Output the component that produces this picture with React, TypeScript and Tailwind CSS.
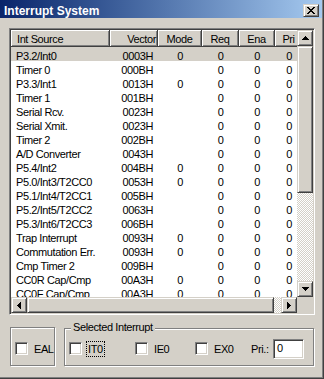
import { type ReactNode } from 'react';

const raised =
  'border border-t-[#d4d0c8] border-l-[#d4d0c8] border-r-[#404040] border-b-[#404040] bg-[#d4d0c8] shadow-[inset_1px_1px_#fff,inset_-1px_-1px_#808080]';
const sunken =
  'border border-t-[#808080] border-l-[#808080] border-r-white border-b-white shadow-[inset_1px_1px_#404040,inset_-1px_-1px_#d4d0c8]';
const dither =
  'bg-[repeating-conic-gradient(#d4d0c8_0%_25%,#fff_0%_50%)] bg-[length:2px_2px]';
const etched = 'border border-[#808080] shadow-[inset_1px_1px_#fff,1px_1px_#fff]';

const rows: string[][] = [
  ['P3.2/Int0', '0003H', '0', '0', '0', '0'],
  ['Timer 0', '000BH', '', '0', '0', '0'],
  ['P3.3/Int1', '0013H', '0', '0', '0', '0'],
  ['Timer 1', '001BH', '', '0', '0', '0'],
  ['Serial Rcv.', '0023H', '', '0', '0', '0'],
  ['Serial Xmit.', '0023H', '', '0', '0', '0'],
  ['Timer 2', '002BH', '', '0', '0', '0'],
  ['A/D Converter', '0043H', '', '0', '0', '0'],
  ['P5.4/Int2', '004BH', '0', '0', '0', '0'],
  ['P5.0/Int3/T2CC0', '0053H', '0', '0', '0', '0'],
  ['P5.1/Int4/T2CC1', '005BH', '', '0', '0', '0'],
  ['P5.2/Int5/T2CC2', '0063H', '', '0', '0', '0'],
  ['P5.3/Int6/T2CC3', '006BH', '', '0', '0', '0'],
  ['Trap Interrupt', '0093H', '0', '0', '0', '0'],
  ['Commutation Err.', '0093H', '0', '0', '0', '0'],
  ['Cmp Timer 2', '009BH', '', '0', '0', '0'],
  ['CC0R Cap/Cmp', '00A3H', '0', '0', '0', '0'],
  ['CC0F Cap/Cmp', '00A3H', '0', '0', '0', '0'],
];

const Arrow = ({ dir }: { dir: 'up' | 'down' | 'left' | 'right' }) => {
  const paths = {
    up: 'M3 0h1v1H3z M2 1h3v1H2z M1 2h5v1H1z M0 3h7v1H0z',
    down: 'M0 0h7v1H0z M1 1h5v1H1z M2 2h3v1H2z M3 3h1v1H3z',
    left: 'M3 0h1v7H3z M2 1h1v5H2z M1 2h1v3H1z M0 3h1v1H0z',
    right: 'M0 0h1v7H0z M1 1h1v5H1z M2 2h1v3H2z M3 3h1v1H3z',
  };
  const vertical = dir === 'up' || dir === 'down';
  return (
    <svg width={vertical ? 7 : 4} height={vertical ? 4 : 7} shapeRendering="crispEdges">
      <path d={paths[dir]} fill="#000" />
    </svg>
  );
};

function Checkbox() {
  return <div className={`h-[13px] w-[13px] shrink-0 bg-white ${sunken}`} />;
}

function CheckItem({ label, focus, width }: { label: string; focus?: boolean; width: string }) {
  return (
    <div className={`flex shrink-0 items-center ${width}`}>
      <Checkbox />
      <span
        className={`ml-[4px] border border-dotted px-[1px] leading-[14px] ${
          focus ? 'border-black' : 'border-transparent'
        }`}
      >
        {label}
      </span>
    </div>
  );
}

function HeaderCell({ children, className }: { children: ReactNode; className: string }) {
  return (
    <div
      className={`h-[17px] shrink-0 overflow-hidden whitespace-nowrap border-r border-b border-[#404040] bg-[#d4d0c8] leading-[18px] shadow-[inset_1px_1px_#fff,inset_-1px_-1px_#808080] ${className}`}
    >
      {children}
    </div>
  );
}

export default function App() {
  return (
    <div className="h-[379px] w-[324px] border-r border-b border-[#404040] font-['Liberation_Sans',Arial,sans-serif] text-[11px] tracking-[-0.4px] text-black">
      <div className="flex h-full flex-col border-r border-b border-[#808080] bg-[#d4d0c8]">
        {/* title bar */}
        <div className="flex h-[18px] shrink-0 items-start justify-between bg-linear-to-r from-[#0a246a] to-[#a6caf0]">
          <span className="h-[18px] pl-[4px] text-[12px] font-bold leading-[22px] tracking-normal text-white">
            Interrupt System
          </span>
          <div className={`mr-[3px] mt-[4px] flex h-[13px] w-[16px] items-center justify-center ${raised}`}>
            <svg width="8" height="7" shapeRendering="crispEdges">
              <path
                d="M0 0h2v1H0z M6 0h2v1H6z M1 1h2v1H1z M5 1h2v1H5z M2 2h4v1H2z M3 3h2v1H3z M2 4h4v1H2z M1 5h2v1H1z M5 5h2v1H5z M0 6h2v1H0z M6 6h2v1H6z"
                fill="#000"
              />
            </svg>
          </div>
        </div>

        {/* list view */}
        <div className={`ml-[9px] mt-[10px] h-[287px] w-[306px] p-[1px] ${sunken}`}>
          <div className="grid grid-cols-[286px_16px] grid-rows-[267px_16px]">
            <div className="flex flex-col overflow-hidden bg-white">
              <div className="flex">
                <HeaderCell className="w-[99px] pl-[6px]">Int Source</HeaderCell>
                <HeaderCell className="w-[48px] pr-[1px] text-right">Vector</HeaderCell>
                <HeaderCell className="w-[44px] text-center">Mode</HeaderCell>
                <HeaderCell className="w-[37px] text-center">Req</HeaderCell>
                <HeaderCell className="w-[36px] text-center">Ena</HeaderCell>
                <HeaderCell className="w-[28px] text-center">Pri</HeaderCell>
              </div>
              {rows.map((r, i) => (
                <div
                  key={r[0]}
                  className={`flex h-[14px] shrink-0 leading-[18px] ${i === 0 ? 'bg-[#d4d0c8]' : ''}`}
                >
                  <div className="w-[99px] shrink-0 whitespace-nowrap pl-[5px]">{r[0]}</div>
                  <div className="w-[48px] shrink-0 pr-[5px] text-right">{r[1]}</div>
                  <div className="w-[44px] shrink-0 text-center">{r[2]}</div>
                  <div className="w-[37px] shrink-0 text-center">{r[3]}</div>
                  <div className="w-[36px] shrink-0 text-center">{r[4]}</div>
                  <div className="w-[28px] shrink-0 text-center">{r[5]}</div>
                </div>
              ))}
            </div>

            {/* vertical scrollbar */}
            <div className="flex flex-col">
              <div className={`flex h-[16px] items-center justify-center ${raised}`}>
                <Arrow dir="up" />
              </div>
              <div className={`h-[147px] ${raised}`} />
              <div className={`flex-1 ${dither}`} />
              <div className={`flex h-[16px] items-center justify-center ${raised}`}>
                <Arrow dir="down" />
              </div>
            </div>

            {/* horizontal scrollbar */}
            <div className="flex">
              <div className={`flex w-[16px] items-center justify-center ${raised}`}>
                <Arrow dir="left" />
              </div>
              <div className={`w-[247px] ${raised}`} />
              <div className={`flex-1 ${dither}`} />
              <div className={`flex w-[16px] items-center justify-center ${raised}`}>
                <Arrow dir="right" />
              </div>
            </div>
            <div className="bg-[#d4d0c8]" />
          </div>
        </div>

        {/* bottom controls */}
        <div className="ml-[10px] mt-[12px] flex items-start">
          <div className={`flex h-[39px] w-[45px] items-center pl-[4px] pt-[4px] ${etched}`}>
            <Checkbox />
            <span className="ml-[6px] leading-[14px]">EAL</span>
          </div>
          <div className={`relative ml-[9px] mt-[1px] flex h-[38px] w-[250px] items-center pl-[4px] pt-[3px] ${etched}`}>
            <span className="absolute -top-[9px] left-[6px] bg-[#d4d0c8] px-[2px] leading-[14px]">
              Selected Interrupt
            </span>
            <CheckItem label="IT0" focus width="w-[66px]" />
            <CheckItem label="IE0" width="w-[60px]" />
            <CheckItem label="EX0" width="w-[56px]" />
            <span className="w-[22px] shrink-0 leading-[14px]">Pri.:</span>
            <div className={`h-[20px] w-[31px] bg-white pl-[3px] leading-[17px] ${sunken}`}>0</div>
          </div>
        </div>
      </div>
    </div>
  );
}
